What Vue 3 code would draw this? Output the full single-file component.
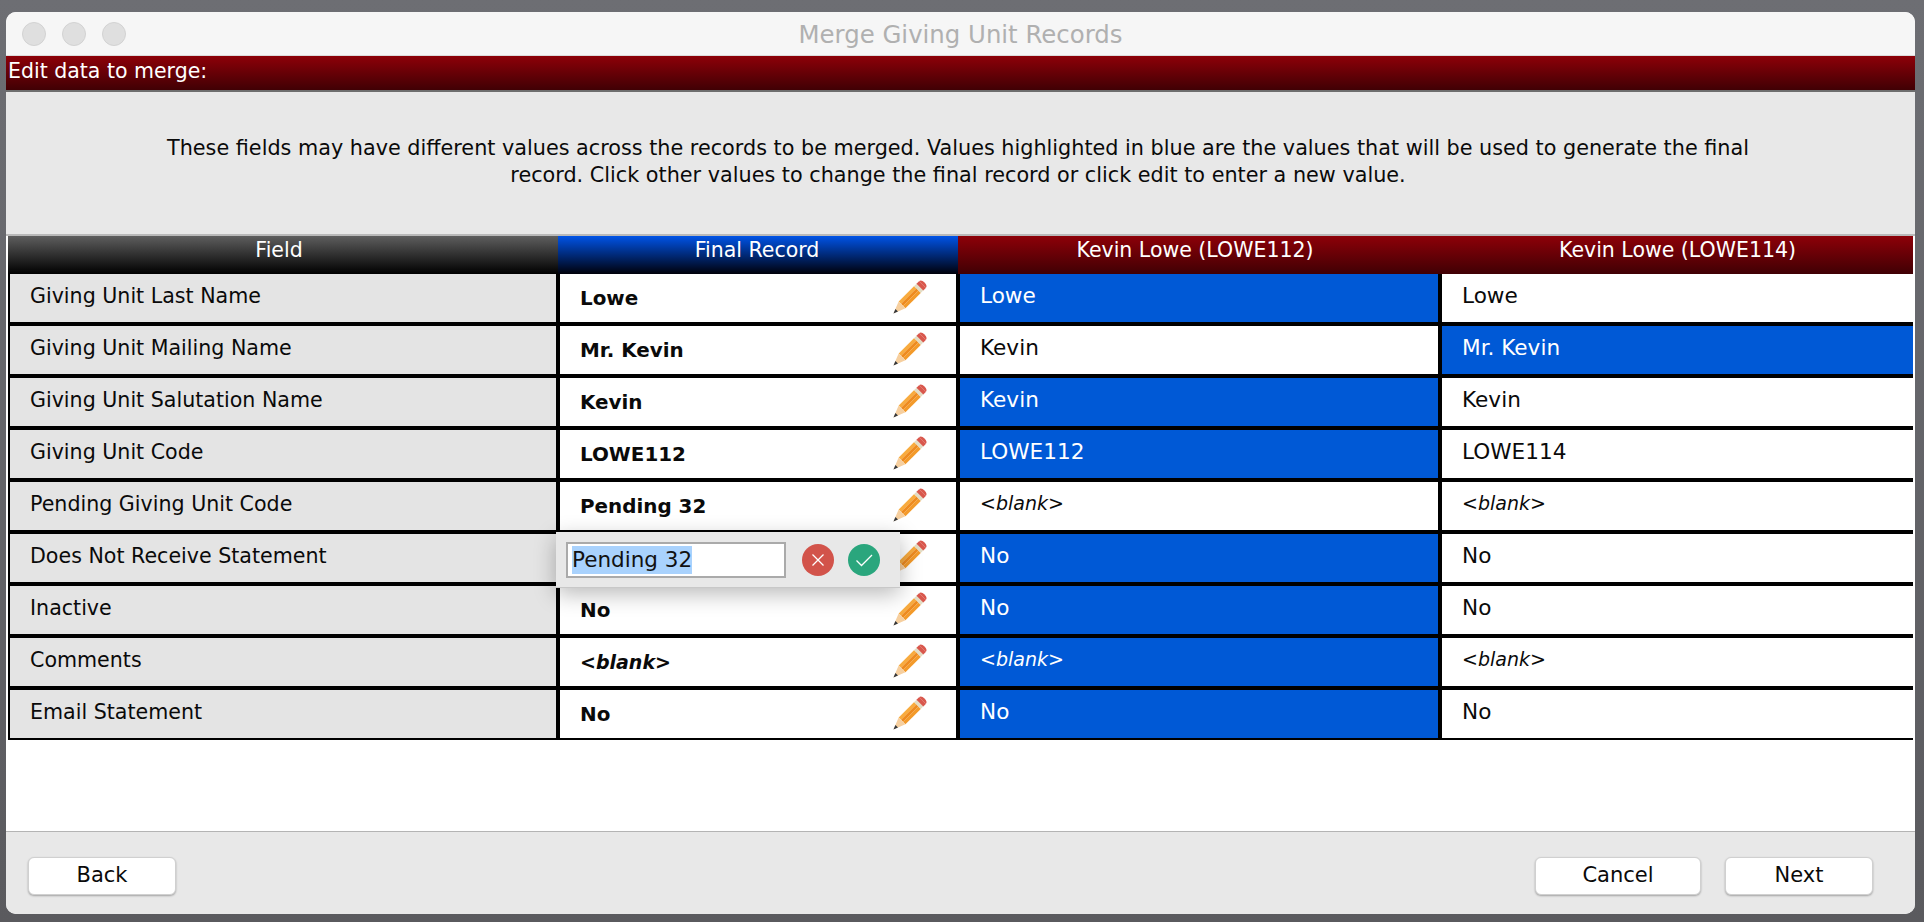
<script setup>
const rows = [
  { field: 'Giving Unit Last Name', final: 'Lowe', a: 'Lowe', b: 'Lowe', pick: 'a' },
  { field: 'Giving Unit Mailing Name', final: 'Mr. Kevin', a: 'Kevin', b: 'Mr. Kevin', pick: 'b' },
  { field: 'Giving Unit Salutation Name', final: 'Kevin', a: 'Kevin', b: 'Kevin', pick: 'a' },
  { field: 'Giving Unit Code', final: 'LOWE112', a: 'LOWE112', b: 'LOWE114', pick: 'a' },
  { field: 'Pending Giving Unit Code', final: 'Pending 32', a: '<blank>', b: '<blank>', pick: '' },
  { field: 'Does Not Receive Statement', final: 'No', a: 'No', b: 'No', pick: 'a' },
  { field: 'Inactive', final: 'No', a: 'No', b: 'No', pick: 'a' },
  { field: 'Comments', final: '<blank>', a: '<blank>', b: '<blank>', pick: 'a' },
  { field: 'Email Statement', final: 'No', a: 'No', b: 'No', pick: 'a' },
]
const isBlank = (v) => v === '<blank>'
</script>

<template>
  <div class="screen">
    <div class="window">
      <header class="titlebar">
        <div class="lights"><i></i><i></i><i></i></div>
        <div class="title">Merge Giving Unit Records</div>
      </header>
      <div class="banner">Edit data to merge:</div>
      <div class="intro">
        <p>These fields may have different values across the records to be merged. Values highlighted in blue are the values that will be used to generate the final record. Click other values to change the final record or click edit to enter a new value.</p>
      </div>
      <div class="content">
        <div class="table">
          <div class="thead">
            <div class="th th-black">Field</div>
            <div class="th th-blue">Final Record</div>
            <div class="th th-red th-a">Kevin Lowe (LOWE112)</div>
            <div class="th th-red th-b">Kevin Lowe (LOWE114)</div>
          </div>
          <div class="tbody">
            <div v-for="r in rows" :key="r.field" class="row">
              <div class="cell field">{{ r.field }}</div>
              <div class="cell final" :class="{ blank: isBlank(r.final) }">
                <span>{{ r.final }}</span>
                <svg class="pencil" viewBox="0 0 32 32" width="32" height="32" aria-hidden="true">
                  <g transform="rotate(45 16 16)">
                    <path d="M11.2 -3h9.6v4h-9.6z" fill="#d9574c"/>
                    <path d="M11.2 -3c0-2 2-3 4.8-3s4.8 1 4.8 3z" fill="#d9574c"/>
                    <path d="M11.2 0.6h9.6v3.6h-9.6z" fill="#e3ddc6"/>
                    <path d="M11.2 4.2h3.3v21.6h-3.3z" fill="#f8ab3e"/>
                    <path d="M14.5 4.2h3v21.6h-3z" fill="#ee8b1f"/>
                    <path d="M17.5 4.2h3.3v21.6h-3.3z" fill="#f39a2a"/>
                    <path d="M11.2 25.8h9.6L16 38z" fill="#f6cf9f"/>
                    <path d="M14.2 33.4h3.6L16 38z" fill="#33373c"/>
                  </g>
                </svg>
              </div>
              <div class="cell val" :class="{ picked: r.pick === 'a', blank: isBlank(r.a) }">{{ r.a }}</div>
              <div class="cell val" :class="{ picked: r.pick === 'b', blank: isBlank(r.b) }">{{ r.b }}</div>
            </div>
          </div>
        </div>
        <div class="popover">
          <div class="input"><span class="sel">Pending 32</span></div>
          <button class="round cancel" aria-label="Cancel">
            <svg viewBox="0 0 32 32" width="32" height="32"><path d="M10.5 10.5l11 11M21.5 10.5l-11 11" stroke="#fff" stroke-width="1.3" fill="none"/></svg>
          </button>
          <button class="round ok" aria-label="Confirm">
            <svg viewBox="0 0 32 32" width="32" height="32"><path d="M8.5 16.5l5 5L24 11" stroke="#fff" stroke-width="1.3" fill="none"/></svg>
          </button>
        </div>
      </div>
      <footer class="footer">
        <button class="btn">Back</button>
        <div class="right">
          <button class="btn wide">Cancel</button>
          <button class="btn">Next</button>
        </div>
      </footer>
    </div>
  </div>
</template>

<style>
html, body { margin: 0; padding: 0; background: #64656a; overflow: hidden; }
</style>

<style scoped>
.screen {
  width: 1924px;
  height: 922px;
  padding: 12px 9px 8px 6px;
  box-sizing: border-box;
  background: linear-gradient(#6d6e73, #5a5a5e);
  font-family: "DejaVu Sans", sans-serif;
  font-size: 20.6px;
  color: #0a0a0a;
}
.window {
  height: 100%;
  display: flex;
  flex-direction: column;
  background: #fff;
  border-radius: 10px;
  overflow: hidden;
}
.titlebar {
  height: 44px;
  box-sizing: border-box;
  flex: none;
  position: relative;
  display: flex;
  align-items: center;
  justify-content: center;
  background: #f6f6f6;
  border-bottom: 1px solid #dcdcdc;
}
.lights {
  position: absolute;
  left: 16px;
  top: 10px;
  display: flex;
  gap: 16px;
}
.lights i {
  width: 24px;
  height: 24px;
  box-sizing: border-box;
  border-radius: 50%;
  background: #dfdfdf;
  border: 1px solid #d2d2d2;
}
.title { font-size: 24.4px; color: #b0b0b0; padding-top: 1px; }
.banner {
  height: 36px;
  flex: none;
  padding-left: 2px;
  display: flex;
  align-items: center;
  padding-bottom: 4px;
  box-sizing: border-box;
  background: linear-gradient(#8d0008, #400004);
  border-bottom: 2px solid #6e6e6e;
  color: #fff;
  font-size: 20.5px;
}
.intro {
  height: 144px;
  flex: none;
  box-sizing: border-box;
  background: #e8e8e8;
  border-bottom: 2px solid #b9b9b9;
  display: flex;
  justify-content: center;
  padding: 43px 5px 0 0;
}
.intro p {
  margin: 0;
  width: 1620px;
  text-align: center;
  line-height: 27px;
  font-size: 20.75px;
}
.content {
  flex: 1;
  position: relative;
  padding: 0 2px 0 2px;
}
.thead {
  display: grid;
  grid-template-columns: 550px 400px 482px 1fr;
  height: 38px;
}
.th {
  color: #fff;
  display: flex;
  align-items: center;
  justify-content: center;
  padding-bottom: 10px;
  box-sizing: border-box;
  font-size: 20.5px;
}
.th-black { background: linear-gradient(#5e5e5e, #000); padding-right: 8px; }
.th-blue { background: linear-gradient(#0053e6, #00000a); padding-right: 2px; }
.th-red { background: linear-gradient(#8d0008, #400004); }
.th-a { padding-right: 8px; }
.th-b { padding-left: 2px; }
.tbody {
  background: #000;
  padding-left: 2px;
  padding-bottom: 2px;
  display: flex;
  flex-direction: column;
  gap: 4px;
}
.row {
  display: grid;
  grid-template-columns: 546px 396px 478px 1fr;
  column-gap: 4px;
  height: 48px;
}
.cell {
  display: flex;
  align-items: center;
  box-sizing: border-box;
  background: #fff;
  padding-bottom: 6px;
}
.field { background: #e4e4e4; padding-left: 20px; padding-bottom: 5px; }
.final {
  padding: 0 16px 0 20px;
  justify-content: space-between;
  font-weight: 700;
  font-size: 19.9px;
}
.pencil { overflow: visible; margin-right: 15px; }
.val { padding-left: 20px; font-size: 21.6px; }
.picked { background: #0059d6; color: #fff; }
.cell.blank { font-style: italic; font-size: 19px; }
.popover {
  position: absolute;
  left: 550px;
  top: 296px;
  width: 344px;
  height: 56px;
  box-sizing: border-box;
  padding: 10px 20px 10px 10px;
  display: flex;
  align-items: center;
  background: #e8e8e8;
  border-bottom: 1px solid #c8c8c8;
  box-shadow: 0 6px 22px rgba(0, 0, 0, 0.28);
}
.input {
  width: 220px;
  height: 36px;
  box-sizing: border-box;
  background: #fff;
  border: 2px solid #aaa;
  padding: 2px 4px;
  display: flex;
  margin-right: 16px;
}
.sel {
  background: #a9d2fd;
  height: 28px;
  line-height: 28px;
  font-size: 21.5px;
  color: #111;
}
.round {
  width: 32px;
  height: 32px;
  border: 0;
  border-radius: 50%;
  padding: 0;
  display: block;
  flex: none;
}
.round svg { display: block; }
.cancel { background: #d2534a; margin-right: 14px; }
.ok { background: #2aa67d; }
.footer {
  height: 83px;
  flex: none;
  box-sizing: border-box;
  background: #e8e8e8;
  border-top: 1px solid #b4b4b4;
  padding: 25px 42px 19px 22px;
  display: flex;
  justify-content: space-between;
}
.right { display: flex; gap: 24px; }
.btn {
  width: 148px;
  height: 38px;
  border-radius: 6px;
  border: 1px solid #d0d0d0;
  background: #fff;
  box-shadow: 0 1px 2px rgba(0, 0, 0, 0.3);
  font: inherit;
  font-size: 21px;
  color: #0a0a0a;
  padding: 0 0 2px;
}
.btn.wide { width: 166px; }
</style>
